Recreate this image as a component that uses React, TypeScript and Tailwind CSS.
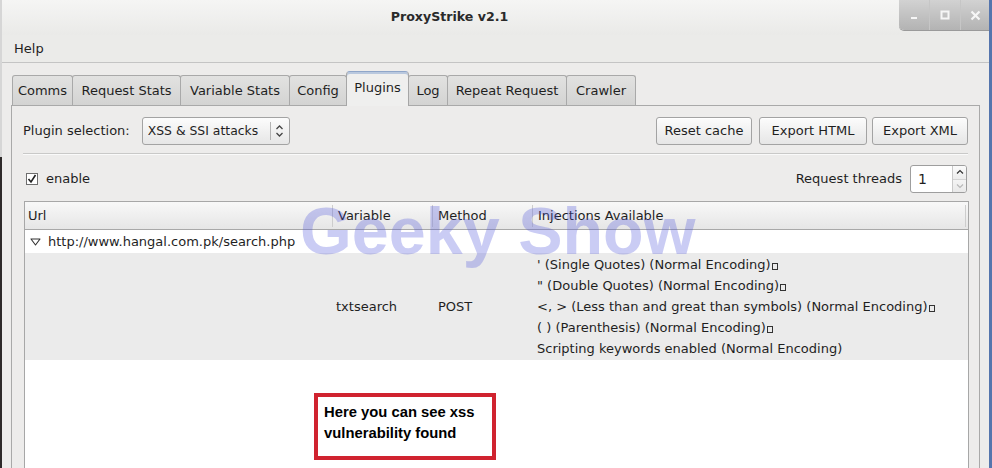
import React from 'react'

/** Tabs of the main notebook, with the widths they take in the window */
const TABS: ReadonlyArray<{ label: string; width: number; active?: boolean }> = [
  { label: 'Comms', width: 61 },
  { label: 'Request Stats', width: 109 },
  { label: 'Variable Stats', width: 110 },
  { label: 'Config', width: 58 },
  { label: 'Plugins', width: 63, active: true },
  { label: 'Log', width: 40 },
  { label: 'Repeat Request', width: 120 },
  { label: 'Crawler', width: 70 },
]

const INJECTIONS = [
  { text: "' (Single Quotes) (Normal Encoding)", tofu: true },
  { text: '" (Double Quotes) (Normal Encoding)', tofu: true },
  { text: '<, > (Less than and great than symbols) (Normal Encoding)', tofu: true },
  { text: '( ) (Parenthesis) (Normal Encoding)', tofu: true },
  { text: 'Scripting keywords enabled (Normal Encoding)', tofu: false },
]

function Tofu() {
  return <span className="ml-[1px] inline-block h-[7px] w-[6px] border border-[#333] align-[-1px]" />
}

function GtkButton({ children, className }: { children: React.ReactNode; className?: string }) {
  return (
    <div
      className={`flex h-[28px] items-center justify-center rounded-[3px] border border-[#a3a3a3] bg-gradient-to-b from-[#fcfcfc] to-[#e6e6e6] shadow-[inset_0_1px_0_#fff] ${className ?? ''}`}
    >
      {children}
    </div>
  )
}

function WindowControls() {
  return (
    <div className="flex h-[30px] self-start overflow-hidden rounded-bl-[5px] bg-gradient-to-b from-[#d2d2d2] to-[#b3b3b3] shadow-[0_1px_0_#9a9a9a]">
      {/* minimize */}
      <div className="flex w-[30px] items-center justify-center">
        <svg width="10" height="10" viewBox="0 0 10 10">
          <rect x="2" y="7" width="6" height="2" fill="#f6f6f6" />
        </svg>
      </div>
      {/* maximize */}
      <div className="flex w-[31px] items-center justify-center border-l border-[#c6c6c6]">
        <svg width="10" height="10" viewBox="0 0 10 10">
          <rect x="1.5" y="1.5" width="7" height="7" fill="none" stroke="#f6f6f6" strokeWidth="2" />
        </svg>
      </div>
      {/* close */}
      <div className="flex w-[29px] items-center justify-center border-l border-[#c6c6c6]">
        <svg width="11" height="11" viewBox="0 0 11 11">
          <path d="M1.5 1.5 L9.5 9.5 M9.5 1.5 L1.5 9.5" stroke="#f6f6f6" strokeWidth="2.2" />
        </svg>
      </div>
    </div>
  )
}

export default function App() {
  return (
    <div className="relative flex h-[468px] w-[992px] overflow-hidden font-['DejaVu_Sans',sans-serif] text-[13px] text-[#1f1f1f]">
      {/* desktop behind the left edge */}
      <div className="flex w-[2px] flex-col">
        <div className="h-[157px] bg-[#d6d6d6]" />
        <div className="flex-1 bg-[#2e2a2a]" />
      </div>

      {/* window */}
      <div className="flex w-[987px] flex-col bg-[#edeceb]">
        {/* title bar */}
        <div className="flex h-[35px] bg-gradient-to-b from-[#f5f5f4] to-[#eaeae8]">
          <div className="flex flex-1 items-center justify-center pr-[2px] text-[12.6px] font-bold text-[#2a2a2a]">
            ProxyStrike v2.1
          </div>
          <WindowControls />
        </div>

        {/* menu bar */}
        <div className="flex h-[28px] items-center border-b border-[#c4c4c4] bg-[#ebebe9] pl-[12px]">
          Help
        </div>

        {/* notebook tabs */}
        <div className="mt-[8px] flex h-[34px] items-end pl-[10px]">
          {TABS.map((t) => (
            <div
              key={t.label}
              style={{ width: t.width }}
              className={
                t.active
                  ? 'relative z-10 -mb-px -ml-px flex h-[35px] items-center justify-center rounded-t-[4px] border border-b-0 border-[#a6a6a6] border-t-[#8fa6c9] bg-[#efefee] pb-[2px] shadow-[inset_0_2px_0_#b9c8de]'
                  : '-ml-px flex h-[30px] items-center justify-center rounded-t-[3px] border border-b-0 border-[#a9a9a9] bg-gradient-to-b from-[#e2e2e1] to-[#d3d3d2] first:ml-0'
              }
            >
              {t.label}
            </div>
          ))}
        </div>

        {/* notebook page */}
        <div className="ml-[9px] flex w-[969px] flex-1 flex-col border border-b-0 border-[#a9a9a9] bg-[#edeceb] px-[11px]">
          {/* plugin selection + exports */}
          <div className="mt-[11px] flex h-[28px] items-center">
            <span>Plugin selection:</span>
            <div className="ml-[12px] flex h-[28px] w-[148px] items-center rounded-[3px] border border-[#a3a3a3] bg-gradient-to-b from-[#fcfcfc] to-[#e6e6e6] pl-[5px]">
              <span className="w-[122px] overflow-hidden text-[12.4px] whitespace-nowrap">XSS &amp; SSI attacks</span>
              <span className="h-[18px] w-px bg-[#b3b3b3]" />
              <svg className="ml-[4px]" width="9" height="14" viewBox="0 0 9 14">
                <path d="M1.5 5 L4.5 2 L7.5 5 M1.5 9 L4.5 12 L7.5 9" fill="none" stroke="#444" strokeWidth="1.3" />
              </svg>
            </div>
            <div className="flex-1" />
            <GtkButton className="w-[96px]">Reset cache</GtkButton>
            <GtkButton className="ml-[7px] w-[108px]">Export HTML</GtkButton>
            <GtkButton className="ml-[5px] w-[96px]">Export XML</GtkButton>
          </div>

          <div className="mt-[8px] border-t border-[#c9c9c8] shadow-[0_1px_0_#fafafa]" />

          {/* enable + threads */}
          <div className="mt-[11px] flex h-[28px] items-center">
            <div className="ml-[3px] flex h-[12px] w-[12px] items-center justify-center border border-[#6e6e6e] bg-white">
              <svg width="10" height="10" viewBox="0 0 10 10">
                <path d="M1.5 5 L4 8 L8.5 1" fill="none" stroke="#222" strokeWidth="1.6" />
              </svg>
            </div>
            <span className="ml-[8px]">enable</span>
            <div className="flex-1" />
            <span>Request threads</span>
            <div className="ml-[8px] mr-[1px] flex h-[28px] w-[57px] overflow-hidden rounded-[3px] border border-[#9e9e9e] bg-white">
              <span className="flex flex-1 items-center pl-[7px] text-[14px]">1</span>
              <div className="flex w-[14px] flex-col border-l border-[#c9c9c9]">
                <div className="flex flex-1 items-center justify-center bg-gradient-to-b from-[#fbfbfb] to-[#ececec]">
                  <svg width="8" height="6" viewBox="0 0 8 6">
                    <path d="M1 4.5 L4 1.5 L7 4.5" fill="none" stroke="#333" strokeWidth="1.2" />
                  </svg>
                </div>
                <div className="flex flex-1 items-center justify-center border-t border-[#d4d4d4] bg-gradient-to-b from-[#f4f4f4] to-[#e9e9e9]">
                  <svg width="8" height="6" viewBox="0 0 8 6">
                    <path d="M1 1.5 L4 4.5 L7 1.5" fill="none" stroke="#b8b8b8" strokeWidth="1.2" />
                  </svg>
                </div>
              </div>
            </div>
          </div>

          {/* results table */}
          <div className="mt-[8px] ml-px flex w-[945px] flex-1 flex-col border border-b-0 border-[#a7a7a7] bg-white">
            <div className="flex h-[28px] shrink-0 items-center border-b border-[#a8a8a8] bg-gradient-to-b from-[#f8f8f8] to-[#e6e6e6]">
              <div className="w-[307px] pl-[3px]">Url</div>
              <div className="w-[100px] border-l border-[#cdcdcd] pl-[5px] leading-[22px]">Variable</div>
              <div className="w-[100px] border-l border-[#cdcdcd] pl-[5px] leading-[22px]">Method</div>
              <div className="flex-1 border-x border-[#cdcdcd] pl-[5px] leading-[22px]">Injections Available</div>
              <div className="w-[2px]" />
            </div>

            <div className="flex h-[23px] shrink-0 items-center pl-[5px]">
              <svg width="11" height="8" viewBox="0 0 11 8">
                <path d="M1 1 L10 1 L5.5 7 Z" fill="none" stroke="#333" strokeWidth="1.1" strokeLinejoin="round" />
              </svg>
              <span className="ml-[7px]">http://www.hangal.com.pk/search.php</span>
            </div>

            <div className="flex h-[107px] shrink-0 items-center bg-[#ebebeb]">
              <div className="w-[307px]" />
              <div className="w-[101px] pl-[4px]">txtsearch</div>
              <div className="w-[100px] pl-[5px]">POST</div>
              <div className="flex flex-col pl-[4px]">
                {INJECTIONS.map((i) => (
                  <div key={i.text} className="h-[21px] leading-[21px] whitespace-nowrap">
                    {i.text}
                    {i.tofu && <Tofu />}
                  </div>
                ))}
              </div>
            </div>

            <div className="flex-1" />
          </div>
        </div>
      </div>

      {/* right window edge / desktop */}
      <div className="w-[3px] bg-[#5575ad]" />

      {/* watermark over the table */}
      <div className="pointer-events-none absolute left-[300px] top-[198px] font-['Liberation_Sans',Arial,sans-serif] text-[66.5px] font-bold leading-[66px] text-[rgba(80,85,220,0.3)]">
        Geeky Show
      </div>

      {/* annotation box */}
      <div className="absolute left-[314px] top-[393px] h-[67px] w-[182px] border-[4px] border-[#d0232f] bg-white pl-[6px] pt-[5px] font-['Liberation_Sans',Arial,sans-serif] text-[14.8px] font-bold leading-[21px] text-black">
        Here you can see xss
        <br />
        vulnerability found
      </div>
    </div>
  )
}
